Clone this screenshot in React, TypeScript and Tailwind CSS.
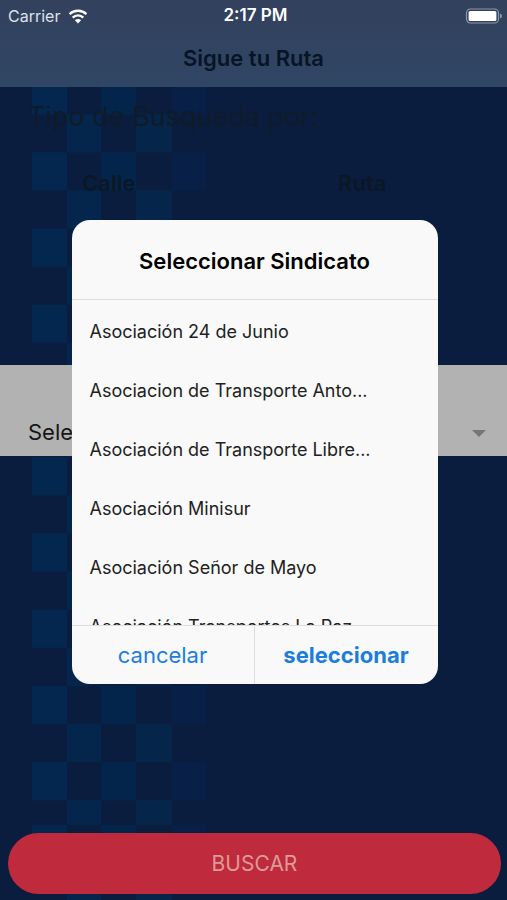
import { useState } from 'react';

// Unions shown in the picker
const unions = [
  { id: 1, name: 'Asociación 24 de Junio' },
  { id: 2, name: 'Asociacion de Transporte Anto...' },
  { id: 3, name: 'Asociación de Transporte Libre...' },
  { id: 4, name: 'Asociación Minisur' },
  { id: 5, name: 'Asociación Señor de Mayo' },
  { id: 6, name: 'Asociación Transportes La Paz' },
];

function StatusBar() {
  return (
    <div className="grid h-8 grid-cols-3 items-center pr-1 pl-2 text-white">
      <div className="flex items-center gap-2 text-base text-[#dde2ea]">
        <span>Carrier</span>
        <svg width="20" height="15" viewBox="0 0 20 15" fill="none" aria-hidden="true">
          <path d="M1.6 5.2a12 12 0 0 1 16.8 0" stroke="#fff" strokeWidth="2.4" />
          <path d="M4.7 8.6a7.5 7.5 0 0 1 10.6 0" stroke="#fff" strokeWidth="2.4" />
          <path d="M10 14.4 6.9 11.2a4.4 4.4 0 0 1 6.2 0Z" fill="#fff" />
        </svg>
      </div>
      <span className="text-center text-[17px] font-semibold">2:17 PM</span>
      <svg className="justify-self-end" width="38" height="17" viewBox="0 0 38 17" aria-hidden="true">
        <rect x="1.5" y="1" width="32" height="14" rx="4" fill="none" stroke="#8c96a6" strokeWidth="1.2" />
        <rect x="3.6" y="3" width="27.8" height="10" rx="1.6" fill="#fff" />
        <path d="M35 5.500v5c1.300-.5 2-1.400 2-2.500s-.7-2-2-2.500Z" fill="#8c96a6" />
      </svg>
    </div>
  );
}

function CheckerBackground() {
  return (
    <svg className="absolute inset-0 h-full w-full" aria-hidden="true">
      <defs>
        <pattern id="checks" width="2000" height="76.2" patternUnits="userSpaceOnUse">
          <rect x="32" width="35" height="38.1" fill="#03274e" />
          <rect x="101" width="35" height="38.1" fill="#04254b" />
          <rect x="172" width="34" height="38.1" fill="#081f47" />
          <rect x="67" y="38.1" width="34" height="38.1" fill="#04264c" />
          <rect x="136" y="38.1" width="36" height="38.1" fill="#05254b" />
        </pattern>
      </defs>
      <rect width="100%" height="825" fill="url(#checks)" />
      <svg y="825">
        <rect width="100%" height="100%" fill="url(#checks)" />
      </svg>
    </svg>
  );
}

export default function App() {
  const [selected, setSelected] = useState<number | null>(null);
  const [open, setOpen] = useState(true);

  return (
    <div className="relative flex min-h-screen flex-col bg-[#0a1d3e] font-['Inter','Liberation_Sans',sans-serif]">
      <CheckerBackground />

      <header className="relative h-[87px] bg-linear-to-b from-[#33415d] to-[#2f4664]">
        <StatusBar />
        <h1 className="pt-2.5 text-center text-[22px] leading-8 font-semibold text-[#071426]">Sigue tu Ruta</h1>
      </header>

      <main className="relative flex flex-1 flex-col">
        <h2 className="pt-3 pl-7 text-[27px] leading-9 text-[#101b2a]">Tipo de Busqueda por:</h2>
        <div className="grid grid-cols-2 pt-8 text-[22px] leading-8 font-semibold text-[#0c1726]">
          <button type="button" className="pr-9">Calle</button>
          <button type="button" className="pr-9">Ruta</button>
        </div>

        <div className="relative mt-[166px] flex h-[91px] items-end bg-[#b2b2b2] px-7 pb-1.5">
          <select
            aria-label="Sindicato"
            className="h-9 w-full appearance-none bg-transparent text-[22px] text-[#161616]"
            value={selected ?? ''}
            onChange={e => setSelected(Number(e.target.value))}
          >
            <option value="">Seleccionar Sindicato</option>
            {unions.map(union => (
              <option key={union.id} value={union.id}>{union.name}</option>
            ))}
          </select>
          <svg className="pointer-events-none absolute right-[21px] bottom-[19px]" width="14" height="7" viewBox="0 0 14 7" aria-hidden="true">
            <path d="M0 0h14L7 7Z" fill="#767676" />
          </svg>
        </div>

        <div className="mt-auto pr-1.5 pb-1.5 pl-2">
          <button type="button" className="h-[61px] w-full rounded-full bg-[#bf2a3c] text-[21px] text-[#dc9a98]">
            BUSCAR
          </button>
        </div>
      </main>

      {/* Union picker */}
      {open && (
        <div className="absolute inset-0 flex items-center justify-center pt-1 pl-0.5">
          <div role="dialog" aria-labelledby="picker-title" className="w-[366px] overflow-hidden rounded-[18px] bg-[#f9f9f9]">
            <h2 id="picker-title" className="flex h-20 items-center justify-center border-b border-[#dcdddd] pt-1 text-[22px] font-semibold text-black">
              Seleccionar Sindicato
            </h2>
            <ul className="h-[325px] overflow-x-hidden overflow-y-auto pt-0.5 [scrollbar-width:none]">
              {unions.map(union => (
                <li key={union.id}>
                  <button
                    type="button"
                    aria-pressed={selected === union.id}
                    className="h-[59px] w-full px-[18px] text-left text-[18px] text-[#222]"
                    onClick={() => setSelected(union.id)}
                  >
                    {union.name}
                  </button>
                </li>
              ))}
            </ul>
            <div className="grid h-[59px] grid-cols-2 border-t border-[#dcdddd] text-[22px] text-[#1c7ddd]">
              <button type="button" className="border-r border-[#dcdddd]" onClick={() => setOpen(false)}>
                cancelar
              </button>
              <button type="button" className="font-bold" onClick={() => setOpen(false)}>
                seleccionar
              </button>
            </div>
          </div>
        </div>
      )}
    </div>
  );
}
